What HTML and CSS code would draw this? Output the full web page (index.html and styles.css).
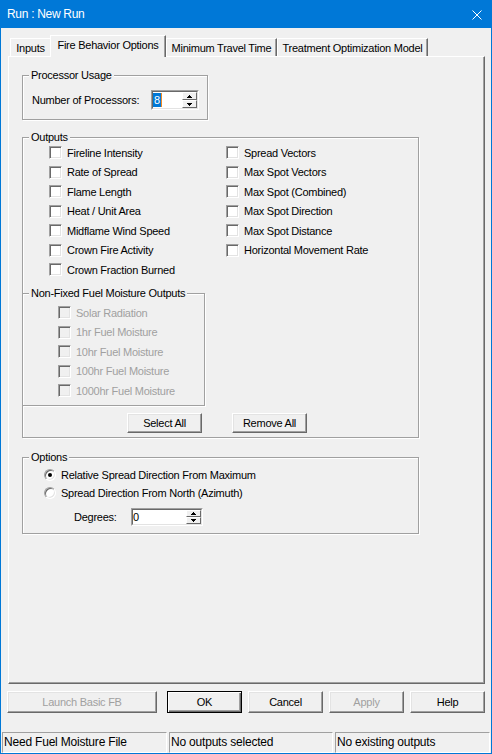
FILE: index.html
```html
<!DOCTYPE html>
<html>
<head>
<meta charset="utf-8">
<title>Run : New Run</title>
<link rel="stylesheet" href="styles.css">
</head>
<body>
<div class="window">
  <div class="titlebar">
    <span class="title">Run : New Run</span>
    <svg class="close" width="10" height="10" viewBox="0 0 10 10"><path d="M0.5 0.5L9.5 9.5M9.5 0.5L0.5 9.5" stroke="#fff" stroke-width="1" fill="none"/></svg>
  </div>

  <div class="tabs">
    <div class="tab tab-inputs prev">Inputs</div>
    <div class="tab tab-fbo active">Fire Behavior Options</div>
    <div class="tab tab-mtt">Minimum Travel Time</div>
    <div class="tab tab-tom">Treatment Optimization Model</div>
  </div>

  <div class="panel">
    <fieldset class="group proc">
      <legend>Processor Usage</legend>
      <div class="gbody field-row">
        <span class="proc-label">Number of Processors:</span>
        <div class="spin spin-proc">
          <div class="spin-inner">
            <div class="spin-val"><span class="sel">8</span><span class="caret"></span></div>
            <div class="spin-btns">
              <div class="sbtn"><svg width="5" height="3" viewBox="0 0 5 3"><rect x="2" y="0" width="1" height="1"/><rect x="1" y="1" width="3" height="1"/><rect x="0" y="2" width="5" height="1"/></svg></div>
              <div class="sbtn"><svg width="5" height="3" viewBox="0 0 5 3"><rect x="0" y="0" width="5" height="1"/><rect x="1" y="1" width="3" height="1"/><rect x="2" y="2" width="1" height="1"/></svg></div>
            </div>
          </div>
        </div>
      </div>
    </fieldset>

    <fieldset class="group outputs">
      <legend>Outputs</legend>
      <div class="checkcols">
        <div class="col">
          <div class="check"><span class="box"></span><span>Fireline Intensity</span></div>
          <div class="check"><span class="box"></span><span>Rate of Spread</span></div>
          <div class="check"><span class="box"></span><span>Flame Length</span></div>
          <div class="check"><span class="box"></span><span>Heat / Unit Area</span></div>
          <div class="check"><span class="box"></span><span>Midflame Wind Speed</span></div>
          <div class="check"><span class="box"></span><span>Crown Fire Activity</span></div>
          <div class="check"><span class="box"></span><span>Crown Fraction Burned</span></div>
        </div>
        <div class="col">
          <div class="check"><span class="box"></span><span>Spread Vectors</span></div>
          <div class="check"><span class="box"></span><span>Max Spot Vectors</span></div>
          <div class="check"><span class="box"></span><span>Max Spot (Combined)</span></div>
          <div class="check"><span class="box"></span><span>Max Spot Direction</span></div>
          <div class="check"><span class="box"></span><span>Max Spot Distance</span></div>
          <div class="check"><span class="box"></span><span>Horizontal Movement Rate</span></div>
        </div>
      </div>

      <fieldset class="group nonfixed">
        <legend>Non-Fixed Fuel Moisture Outputs</legend>
        <div class="gbody">
          <div class="check disabled"><span class="box"></span><span>Solar Radiation</span></div>
          <div class="check disabled"><span class="box"></span><span>1hr Fuel Moisture</span></div>
          <div class="check disabled"><span class="box"></span><span>10hr Fuel Moisture</span></div>
          <div class="check disabled"><span class="box"></span><span>100hr Fuel Moisture</span></div>
          <div class="check disabled"><span class="box"></span><span>1000hr Fuel Moisture</span></div>
        </div>
      </fieldset>

      <div class="sel-buttons">
        <div class="btn">Select All</div>
        <div class="btn">Remove All</div>
      </div>
    </fieldset>

    <fieldset class="group options">
      <legend>Options</legend>
      <div class="gbody">
        <div class="radio-row"><span class="radio checked"></span><span>Relative Spread Direction From Maximum</span></div>
        <div class="radio-row"><span class="radio"></span><span>Spread Direction From North (Azimuth)</span></div>
        <div class="deg-row">
          <span class="deg-label">Degrees:</span>
          <div class="spin spin-deg">
            <div class="spin-inner">
              <div class="spin-val"><span class="val">0</span></div>
              <div class="spin-btns">
                <div class="sbtn"><svg width="5" height="3" viewBox="0 0 5 3"><rect x="2" y="0" width="1" height="1"/><rect x="1" y="1" width="3" height="1"/><rect x="0" y="2" width="5" height="1"/></svg></div>
                <div class="sbtn"><svg width="5" height="3" viewBox="0 0 5 3"><rect x="0" y="0" width="5" height="1"/><rect x="1" y="1" width="3" height="1"/><rect x="2" y="2" width="1" height="1"/></svg></div>
              </div>
            </div>
          </div>
        </div>
      </div>
    </fieldset>
  </div>

  <div class="dlg-buttons">
    <div class="btn btn-launch disabled">Launch Basic FB</div>
    <div class="btn btn-default">OK</div>
    <div class="btn">Cancel</div>
    <div class="btn disabled">Apply</div>
    <div class="btn">Help</div>
  </div>

  <div class="statusbar">
    <div class="status">Need Fuel Moisture File</div>
    <div class="status">No outputs selected</div>
    <div class="status">No existing outputs</div>
  </div>
</div>
</body>
</html>
```

FILE: styles.css
```css
* { box-sizing: border-box; }
html, body { margin: 0; padding: 0; }
body {
  width: 492px;
  height: 754px;
  overflow: hidden;
  background: #f0f0f0;
  font-family: "Liberation Sans", Arial, sans-serif;
  font-size: 11px;
  letter-spacing: -0.25px;
  color: #000;
}

.window {
  width: 492px;
  height: 754px;
  border: 1px solid #0078d7;
  border-top: 0;
  display: flex;
  flex-direction: column;
  background: #f0f0f0;
}

/* Title bar */
.titlebar {
  flex: none;
  height: 28px;
  background: #0078d7;
  color: #fff;
  display: flex;
  align-items: center;
  justify-content: space-between;
  padding: 0 9px 0 6px;
}
.title {
  font-size: 12px;
  letter-spacing: -0.3px;
}
.close { display: block; margin-top: 1px; }

/* Tabs */
.tabs {
  flex: none;
  display: flex;
  align-items: flex-end;
  height: 21px;
  margin-top: 7px;
  padding-left: 9px;
}
.tab {
  height: 18px;
  display: flex;
  align-items: center;
  justify-content: center;
  white-space: nowrap;
  border-top: 1px solid #fff;
  border-left: 1px solid #fff;
  border-right: 1px solid #696969;
  box-shadow: inset -1px 0 0 #a0a0a0;
  background: #f0f0f0;
}
.tab.prev { border-right: 0; box-shadow: none; }
.tab.active {
  height: 22px;
  margin-bottom: -1px;
  padding-bottom: 3px;
  position: relative;
  z-index: 1;
}
.tab-inputs { width: 40px; }
.tab-fbo { width: 116px; }
.tab-mtt { width: 111px; }
.tab-tom { width: 151px; }

/* Tab page */
.panel {
  flex: none;
  margin-left: 7px;
  width: 477px;
  height: 628px;
  border: 1px solid;
  border-color: #fff #696969 #696969 #fff;
  box-shadow: inset -1px -1px 0 #a0a0a0;
  padding: 12px 0 0 13px;
}

/* Group boxes */
.group {
  margin: 0;
  padding: 0;
  min-width: 0;
  border: 1px solid #a0a0a0;
  box-shadow: inset 1px 1px 0 #fff, 1px 1px 0 #fff;
}
.group > legend {
  margin-left: 6px;
  padding: 0 2px;
  line-height: 13px;
  background: #f0f0f0;
  white-space: nowrap;
}

.proc { width: 186px; }
.proc .gbody { padding: 8px 0 9px 9px; }
.field-row {
  display: flex;
  align-items: center;
  height: 37px;
}
.proc-label { width: 119px; }

.outputs {
  width: 397px;
  margin-top: 11px;
  padding: 0 0 4px 0;
}
.checkcols {
  display: grid;
  grid-template-columns: 177px auto;
  padding-left: 26px;
  margin-top: -1px;
}
.col { display: flex; flex-direction: column; }

.check {
  height: 19.5px;
  display: flex;
  align-items: center;
  white-space: nowrap;
}
.box {
  flex: none;
  width: 13px;
  height: 13px;
  margin-right: 5px;
  background: #fff;
  border: 1px solid;
  border-color: #a0a0a0 #fff #fff #a0a0a0;
  box-shadow: inset 1px 1px 0 #696969, inset -1px -1px 0 #e3e3e3;
}
.check.disabled { color: #a0a0a0; }
.check.disabled .box { background: #f0f0f0; }

.nonfixed {
  width: 183px;
  margin: 7px 0 0 -1px;
}
.nonfixed .gbody { padding: 3.5px 0 4px 35px; }

.sel-buttons {
  display: flex;
  gap: 30px;
  margin-top: 7px;
  padding-left: 104px;
}
.sel-buttons .btn { width: 75px; height: 20px; }

/* Buttons */
.btn {
  display: flex;
  align-items: center;
  justify-content: center;
  white-space: nowrap;
  background: #f0f0f0;
  border: 1px solid;
  border-color: #fff #696969 #696969 #fff;
  box-shadow: inset -1px -1px 0 #a0a0a0, inset 1px 1px 0 #e3e3e3;
}
.btn.disabled { color: #a0a0a0; }
.btn-default {
  border-color: #000;
  box-shadow: inset 1px 1px 0 #fff, inset -1px -1px 0 #696969, inset -2px -2px 0 #a0a0a0;
}

/* Options */
.options {
  width: 397px;
  margin-top: 13px;
}
.options .gbody { padding: 2px 0 7px 21px; }
.radio-row {
  height: 18px;
  display: flex;
  align-items: center;
  white-space: nowrap;
}
.radio {
  flex: none;
  width: 12px;
  height: 12px;
  margin-right: 5px;
  border-radius: 50%;
  background: #fff;
  border: 1px solid;
  border-color: #a0a0a0 #fff #fff #a0a0a0;
  box-shadow: inset 1px 1px 0 #696969, inset -1px -1px 0 #e3e3e3;
}
.radio.checked::after {
  content: "";
  display: block;
  width: 4px;
  height: 4px;
  margin: 3px auto 0;
  border-radius: 50%;
  background: #000;
}
.deg-row {
  display: flex;
  align-items: center;
  margin-top: 6px;
  padding-left: 30px;
}
.deg-label { width: 57px; }

/* Spin edit */
.spin {
  border: 1px solid;
  border-color: #a0a0a0 #fff #fff #a0a0a0;
}
.spin-inner {
  height: 100%;
  display: flex;
  border: 1px solid;
  border-color: #696969 #e3e3e3 #e3e3e3 #696969;
  background: #fff;
}
.spin-proc { width: 48px; height: 20px; }
.spin-deg { width: 72px; height: 18px; }
.spin-val {
  flex: 1;
  display: flex;
  align-items: center;
}
.sel {
  background: #0078d7;
  color: #fff;
  padding: 0 1px;
  line-height: 14px;
}
.caret {
  width: 1px;
  height: 14px;
  background: #f08a24;
}
.val { padding-left: 0; }
.spin-btns {
  flex: none;
  width: 15px;
  display: flex;
  flex-direction: column;
}
.sbtn {
  flex: 1;
  display: flex;
  align-items: center;
  justify-content: center;
  background: #f0f0f0;
  border: 1px solid;
  border-color: #fff #696969 #696969 #fff;
}
.sbtn svg { display: block; fill: #000; }

/* Dialog buttons */
.dlg-buttons {
  flex: none;
  display: flex;
  gap: 6px;
  height: 22px;
  margin-top: 7px;
  padding-left: 6px;
}
.dlg-buttons .btn { width: 75px; height: 22px; }
.dlg-buttons .btn-launch { width: 150px; margin-right: 4px; }

/* Status bar */
.statusbar {
  flex: none;
  display: grid;
  grid-template-columns: 165px 164px 155px;
  column-gap: 2px;
  height: 21px;
  margin-top: 19px;
  padding-left: 1px;
}
.status {
  border: 1px solid;
  border-color: #a0a0a0 #fff #fff #a0a0a0;
  padding-left: 1px;
  font-size: 12px;
  letter-spacing: -0.2px;
  line-height: 19px;
  white-space: nowrap;
  overflow: hidden;
}
```
